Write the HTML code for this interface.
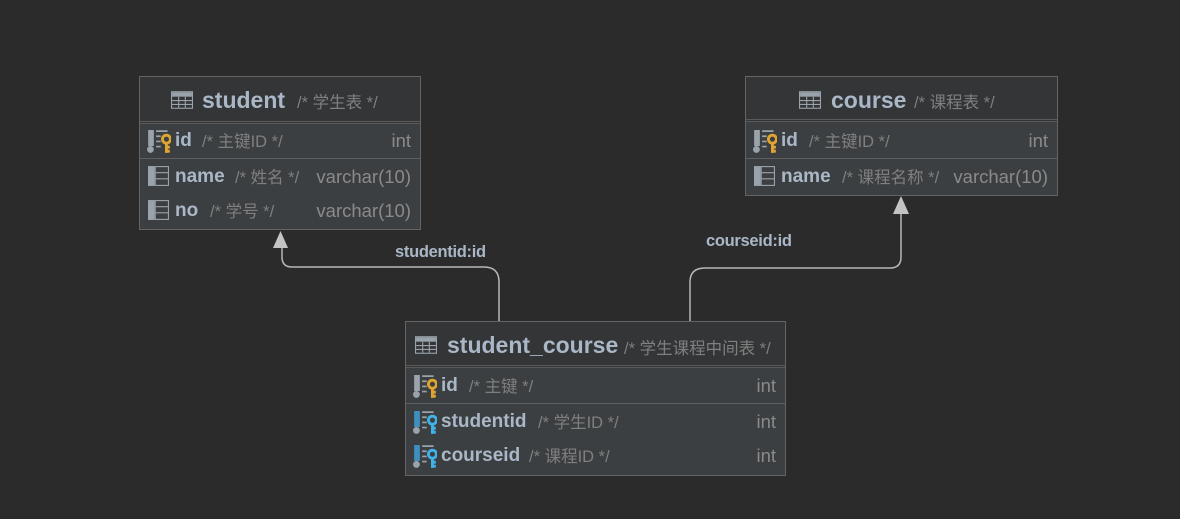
<!DOCTYPE html>
<html><head><meta charset="utf-8"><style>
body{margin:0;width:1180px;height:519px;background:#2b2b2b;position:relative;overflow:hidden;font-family:"Liberation Sans","Noto Sans CJK SC",sans-serif}
.box{position:absolute;background:#3c3f41;border:1px solid #646464;box-sizing:border-box}
.hd{position:absolute;left:0;right:0;top:0;background:#333537;border-bottom:3px double #5a5a5a;box-sizing:border-box}
.t{position:absolute;white-space:nowrap;line-height:20px}
.b{font-weight:bold;color:#a9b7c6;font-size:23px}
.c{color:#7f7f7f;font-size:16.5px}
.ty{color:#8a8a8a;font-size:18.5px}
.f{font-weight:bold;color:#a9b7c6;font-size:19px}
.sep{position:absolute;left:0;right:0;height:1px;background:#5e5e5e}
svg{position:absolute}
</style></head><body>
<svg width="0" height="0" style="position:absolute"><defs>
<g id="tbl"><rect x="0.5" y="0.5" width="19" height="15" fill="none" stroke="#9aa3ab"/><rect x="1" y="1" width="18" height="4" fill="#9aa3ab"/><path d="M1 8.5h18M1 12h18M7 5v10M13 5v10" stroke="#9aa3ab" fill="none"/></g>
<g id="col"><rect x="0" y="0" width="6" height="18" fill="#9aa3ab"/><rect x="6.5" y="0.5" width="12" height="17" fill="none" stroke="#9aa3ab"/><path d="M7 6h11M7 11.5h11" stroke="#9aa3ab"/></g>
<g id="pk"><rect x="1" y="0" width="5" height="14" fill="#9aa3ab"/><circle cx="3" cy="17" r="3" fill="#9aa3ab"/><path d="M8 1h10M8 5.5h4M8 10h4M8 14.5h4" stroke="#9aa3ab" stroke-width="1.5"/><circle cx="17" cy="8" r="3.5" fill="none" stroke="#e0a531" stroke-width="2.5"/><path d="M17 11v9M17 15h3M17 18.5h3" stroke="#e0a531" stroke-width="2.5"/></g>
<g id="fk"><rect x="1" y="0" width="5" height="14" fill="#3e8fc0"/><circle cx="3" cy="17" r="3" fill="#9aa3ab"/><path d="M8 1h10M8 5.5h4M8 10h4M8 14.5h4" stroke="#9aa3ab" stroke-width="1.5"/><circle cx="17" cy="8" r="3.5" fill="none" stroke="#3fb3e8" stroke-width="2.5"/><path d="M17 11v9M17 15h3M17 18.5h3" stroke="#3fb3e8" stroke-width="2.5"/></g>
</defs></svg>

<svg width="1180" height="519" style="left:0;top:0">
<path d="M499 321V282Q499 267 484 267H292Q282 267 282 257V245" fill="none" stroke="#b8b8b8" stroke-width="1.5"/>
<path d="M273 248L280.5 231L288 248Z" fill="#c4c4c4"/>
<path d="M690 321V282Q690 268 705 268H890Q901 268 901 257V212" fill="none" stroke="#b8b8b8" stroke-width="1.5"/>
<path d="M893 214L901 196L909 214Z" fill="#c4c4c4"/>
</svg>
<div class="t" style="left:395px;top:242px;color:#a9b7c6;font-size:16.5px;font-weight:bold;letter-spacing:-0.3px">studentid:id</div>
<div class="t" style="left:706px;top:231px;color:#a9b7c6;font-size:16.5px;font-weight:bold;letter-spacing:-0.3px">courseid:id</div>

<!-- student -->
<div class="box" style="left:139px;top:76px;width:282px;height:154px">
<div class="hd" style="height:47px"></div>
<svg width="22" height="18" viewBox="0 0 20 16" style="left:31px;top:14px"><use href="#tbl"/></svg>
<div class="t b" style="left:62px;top:13px">student</div>
<div class="t c" style="left:157px;top:16px">/* 学生表 */</div>
<svg width="24" height="24" viewBox="0 0 21 21" style="left:7px;top:53px"><use href="#pk"/></svg>
<div class="t f" style="left:35px;top:54px">id</div>
<div class="t c" style="left:62px;top:55px">/* 主键ID */</div>
<div class="t ty" style="right:9px;top:54px">int</div>
<div class="sep" style="top:81px"></div>
<svg width="21" height="20" viewBox="0 0 19 18" style="left:8px;top:89px"><use href="#col"/></svg>
<div class="t f" style="left:35px;top:90px">name</div>
<div class="t c" style="left:95px;top:91px">/* 姓名 */</div>
<div class="t ty" style="right:9px;top:90px">varchar(10)</div>
<svg width="21" height="20" viewBox="0 0 19 18" style="left:8px;top:123px"><use href="#col"/></svg>
<div class="t f" style="left:35px;top:124px">no</div>
<div class="t c" style="left:70px;top:125px">/* 学号 */</div>
<div class="t ty" style="right:9px;top:124px">varchar(10)</div>
</div>

<!-- course -->
<div class="box" style="left:745px;top:76px;width:313px;height:120px">
<div class="hd" style="height:45px"></div>
<svg width="22" height="18" viewBox="0 0 20 16" style="left:53px;top:14px"><use href="#tbl"/></svg>
<div class="t b" style="left:85px;top:13px">course</div>
<div class="t c" style="left:168px;top:16px">/* 课程表 */</div>
<svg width="24" height="24" viewBox="0 0 21 21" style="left:7px;top:53px"><use href="#pk"/></svg>
<div class="t f" style="left:35px;top:54px">id</div>
<div class="t c" style="left:63px;top:55px">/* 主键ID */</div>
<div class="t ty" style="right:9px;top:54px">int</div>
<div class="sep" style="top:81px"></div>
<svg width="21" height="20" viewBox="0 0 19 18" style="left:8px;top:89px"><use href="#col"/></svg>
<div class="t f" style="left:35px;top:90px">name</div>
<div class="t c" style="left:96px;top:91px">/* 课程名称 */</div>
<div class="t ty" style="right:9px;top:90px">varchar(10)</div>
</div>

<!-- student_course -->
<div class="box" style="left:405px;top:321px;width:381px;height:155px">
<div class="hd" style="height:46px"></div>
<svg width="22" height="18" viewBox="0 0 20 16" style="left:9px;top:14px"><use href="#tbl"/></svg>
<div class="t b" style="left:41px;top:13px">student_course</div>
<div class="t c" style="left:218px;top:17px">/* 学生课程中间表 */</div>
<svg width="24" height="24" viewBox="0 0 21 21" style="left:7px;top:53px"><use href="#pk"/></svg>
<div class="t f" style="left:35px;top:54px">id</div>
<div class="t c" style="left:63px;top:55px">/* 主键 */</div>
<div class="t ty" style="right:9px;top:54px">int</div>
<div class="sep" style="top:81px"></div>
<svg width="24" height="24" viewBox="0 0 21 21" style="left:7px;top:89px"><use href="#fk"/></svg>
<div class="t f" style="left:35px;top:90px">studentid</div>
<div class="t c" style="left:132px;top:91px">/* 学生ID */</div>
<div class="t ty" style="right:9px;top:90px">int</div>
<svg width="24" height="24" viewBox="0 0 21 21" style="left:7px;top:123px"><use href="#fk"/></svg>
<div class="t f" style="left:35px;top:124px">courseid</div>
<div class="t c" style="left:123px;top:125px">/* 课程ID */</div>
<div class="t ty" style="right:9px;top:124px">int</div>
</div>
</body></html>
